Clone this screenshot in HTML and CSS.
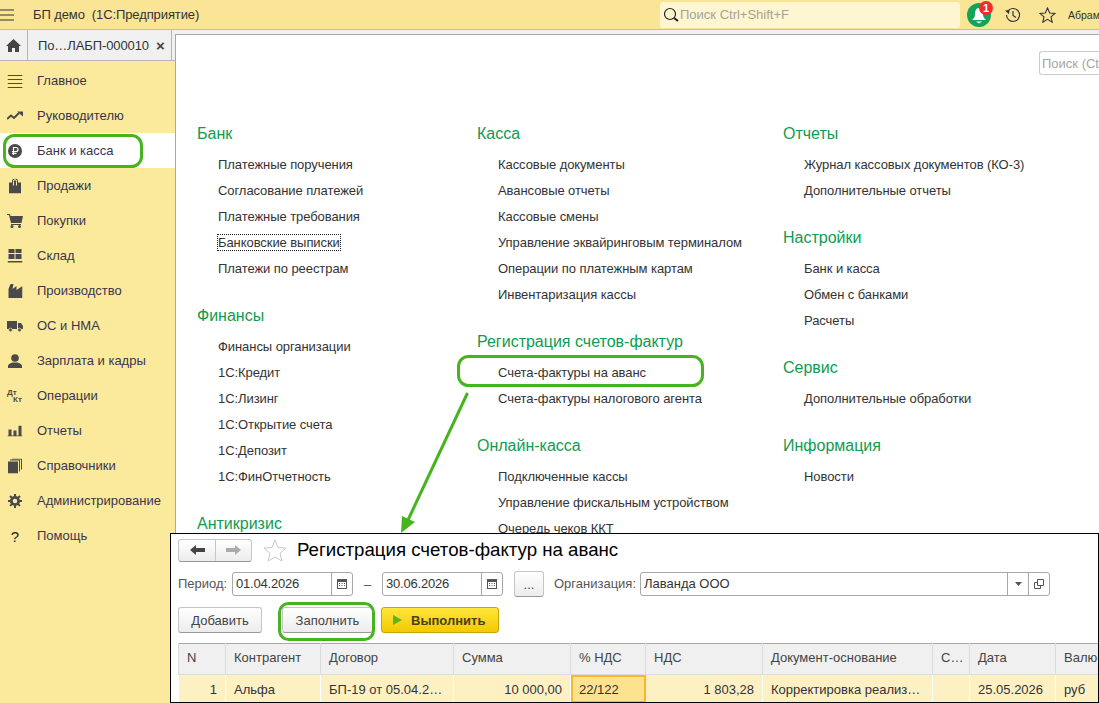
FILE: index.html
```html
<!DOCTYPE html>
<html lang="ru">
<head>
  <meta charset="UTF-8">
  <title>БП демо (1С:Предприятие)</title>
  <link rel="stylesheet" href="styles.css">
</head>
<body>
  <header class="topbar">
    <svg class="burger" width="14" height="12" viewBox="0 0 14 12"><path d="M0 1h14M0 6h14M0 11h14" stroke="#333" fill="none"/></svg>
    <div class="app-title">БП демо&nbsp; (1С:Предприятие)</div>
    <div class="global-search">
      <svg width="16" height="16" viewBox="0 0 16 16"><circle cx="7" cy="7" r="5.500" fill="none" stroke="#222" stroke-width="1.200"/><path d="M11 11l4 3" stroke="#222" stroke-width="2"/></svg>
      <span>Поиск Ctrl+Shift+F</span>
    </div>
    <div class="bell">
      <svg width="24" height="24" viewBox="0 0 24 24"><circle cx="12" cy="12" r="12" fill="#12a55a"/><path d="M12 5c3 0 4 3 4 6 0 3 1 4 3 6H5c2-2 3-3 3-6 0-3 1-6 4-6z" fill="#fff"/><path d="M9 18.500h6l-3 2z" fill="#fff"/></svg>
      <span class="bell-count">1</span>
    </div>
    <svg class="history" width="16" height="16" viewBox="0 0 16 16"><path d="M2.500 4.500A6.500 6.500 0 1 1 1.500 8" fill="none" stroke="#333" stroke-width="1.100"/><path d="M0 3.500l4.500-.5-.5 4.200z" fill="#333"/><path d="M8 4v4.500l3 2" fill="none" stroke="#333" stroke-width="1.200"/></svg>
    <svg class="fav" width="17" height="16" viewBox="0 0 17 16"><path d="M8.500 1l2.200 5 5.300.4-4 3.500 1.200 5.300-4.700-2.800-4.700 2.800 1.200-5.300-4-3.500 5.300-.4z" fill="none" stroke="#333" stroke-width="1.100"/></svg>
    <div class="user">Абрам</div>
  </header>

  <div class="workspace">
    <aside class="side">
      <div class="tabstrip">
        <div class="home"><svg width="15" height="13" viewBox="0 0 15 13"><path d="M7.500 0L0 7h2v6h4V9h3v4h4V7h2z" fill="#444"/></svg></div>
        <div class="tab"><span>По…ЛАБП-000010</span><b>×</b></div>
      </div>
      <nav class="menu">
        <a class="menu-item"><svg width="15" height="14" viewBox="0 0 15 14"><path d="M0 1.500h15M0 5.500h15M0 9.500h15M0 13.500h15" stroke="#4a4a4a" fill="none"/></svg>Главное</a>
        <a class="menu-item"><svg width="16" height="10" viewBox="0 0 16 10"><path d="M0 8l4-3.500 3 2.500 5-5" fill="none" stroke="#4a4a4a" stroke-width="2"/><path d="M10 .5h6v5z" fill="#4a4a4a"/></svg>Руководителю</a>
        <a class="menu-item active"><svg width="14" height="14" viewBox="0 0 14 14"><circle cx="7" cy="7" r="7" fill="#4a4a4a"/><path d="M5.500 11V3.500H8a2 2 0 0 1 0 4H4M4 9.300h4.500" fill="none" stroke="#fff" stroke-width="1.200"/></svg>Банк и касса</a>
        <a class="menu-item"><svg width="12" height="15" viewBox="0 0 12 15"><path d="M0 4h3V3a3 3 0 0 1 6 0v1h3v11H0z" fill="#4a4a4a"/><path d="M4.500 7V3a1.500 2 0 0 1 3 0v4" fill="none" stroke="#fbea9b"/></svg>Продажи</a>
        <a class="menu-item"><svg width="16" height="14" viewBox="0 0 16 14"><path d="M0 0h3l.5 2H16l-1.500 7H4L2 1H0z" fill="#4a4a4a"/><path d="M4 10h10v1H4z" fill="#4a4a4a"/><circle cx="5" cy="12.500" r="1.500" fill="#4a4a4a"/><circle cx="12.500" cy="12.500" r="1.500" fill="#4a4a4a"/></svg>Покупки</a>
        <a class="menu-item"><svg width="15" height="14" viewBox="0 0 15 14"><path d="M1 0h6v4H1zM8 0h6v4H8zM1 5h6v5H1zM8 5h6v5H8zM0 12h15v1.500H0z" fill="#4a4a4a"/></svg>Склад</a>
        <a class="menu-item"><svg width="15" height="14" viewBox="0 0 15 14"><path d="M1 14V5L3 0h3L5 5l4-3v4l6-4v12z" fill="#4a4a4a"/></svg>Производство</a>
        <a class="menu-item"><svg width="16" height="12" viewBox="0 0 16 12"><path d="M0 1h10v8H0zM11 3h3l2 3v3h-5z" fill="#4a4a4a"/><circle cx="3.500" cy="10" r="1.800" fill="#4a4a4a" stroke="#fbea9b" stroke-width=".7"/><circle cx="12.500" cy="10" r="1.800" fill="#4a4a4a" stroke="#fbea9b" stroke-width=".7"/></svg>ОС и НМА</a>
        <a class="menu-item"><svg width="14" height="14" viewBox="0 0 14 14"><circle cx="7" cy="4" r="3.800" fill="#4a4a4a"/><path d="M0 14v-2c0-2 3-3 4.500-3.500h5C11 9 14 10 14 12v2z" fill="#4a4a4a"/></svg>Зарплата и кадры</a>
        <a class="menu-item"><span class="dtkt"><i>Дт</i><i>Кт</i></span>Операции</a>
        <a class="menu-item"><svg width="15" height="11" viewBox="0 0 15 11"><path d="M1 4h3v6H1zM6 5h3v5H6zM11 0h3v10h-3zM0 10h15v1H0z" fill="#4a4a4a"/></svg>Отчеты</a>
        <a class="menu-item"><svg width="14" height="15" viewBox="0 0 14 15"><path d="M0 3h10v12H0z" fill="#4a4a4a"/><path d="M2 1.500h9.500V13M4 .5h9.500V11" fill="none" stroke="#4a4a4a"/></svg>Справочники</a>
        <a class="menu-item"><svg width="14" height="14" viewBox="0 0 14 14"><circle cx="7" cy="7" r="3.700" fill="none" stroke="#4a4a4a" stroke-width="2.800"/><path d="M7 0v14M0 7h14M2 2l10 10M12 2L2 12" stroke="#4a4a4a" stroke-width="2" stroke-dasharray="2.500 9"/></svg>Администрирование</a>
        <a class="menu-item"><span class="help-mark">?</span>Помощь</a>
      </nav>
    </aside>

    <div class="main-wrap">
      <div class="ticks"><i></i><i></i><i></i><i></i><i></i><i></i></div>
      <main class="panel">
        <div class="panel-search">Поиск (Ct</div>
        <div class="columns">
          <div class="col col-1">
            <section class="group">
              <h2>Банк</h2>
              <a>Платежные поручения</a>
              <a>Согласование платежей</a>
              <a>Платежные требования</a>
              <a><span class="focused">Банковские выписки</span></a>
              <a>Платежи по реестрам</a>
            </section>
            <section class="group">
              <h2>Финансы</h2>
              <a>Финансы организации</a>
              <a>1С:Кредит</a>
              <a>1С:Лизинг</a>
              <a>1С:Открытие счета</a>
              <a>1С:Депозит</a>
              <a>1С:ФинОтчетность</a>
            </section>
            <section class="group">
              <h2>Антикризис</h2>
            </section>
          </div>
          <div class="col col-2">
            <section class="group">
              <h2>Касса</h2>
              <a>Кассовые документы</a>
              <a>Авансовые отчеты</a>
              <a>Кассовые смены</a>
              <a>Управление эквайринговым терминалом</a>
              <a>Операции по платежным картам</a>
              <a>Инвентаризация кассы</a>
            </section>
            <section class="group">
              <h2>Регистрация счетов-фактур</h2>
              <a>Счета-фактуры на аванс</a>
              <a>Счета-фактуры налогового агента</a>
            </section>
            <section class="group">
              <h2>Онлайн-касса</h2>
              <a>Подключенные кассы</a>
              <a>Управление фискальным устройством</a>
              <a>Очередь чеков ККТ</a>
            </section>
          </div>
          <div class="col col-3">
            <section class="group">
              <h2>Отчеты</h2>
              <a>Журнал кассовых документов (КО-3)</a>
              <a>Дополнительные отчеты</a>
            </section>
            <section class="group">
              <h2>Настройки</h2>
              <a>Банк и касса</a>
              <a>Обмен с банками</a>
              <a>Расчеты</a>
            </section>
            <section class="group">
              <h2>Сервис</h2>
              <a>Дополнительные обработки</a>
            </section>
            <section class="group">
              <h2>Информация</h2>
              <a>Новости</a>
            </section>
          </div>
        </div>
      </main>
    </div>
  </div>

  <div class="inset">
    <div class="inset-head">
      <div class="nav-btns">
        <button class="nav-btn"><svg width="15" height="10" viewBox="0 0 15 10"><path d="M0 5l6-5v3h9v4H6v3z" fill="#444"/></svg></button>
        <button class="nav-btn"><svg width="15" height="10" viewBox="0 0 15 10"><path d="M15 5L9 0v3H0v4h9v3z" fill="#aaa"/></svg></button>
      </div>
      <svg class="inset-star" width="24" height="23" viewBox="0 0 24 23"><path d="M12 1l3.100 7.500 8 .6-6.100 5.200 1.900 7.800-6.900-4.200-6.900 4.200 1.900-7.800L.9 9.100l8-.6z" fill="#fff" stroke="#c8c8c8"/></svg>
      <h1>Регистрация счетов-фактур на аванс</h1>
    </div>
    <div class="filter-row">
      <label>Период:</label>
      <div class="field date"><span>01.04.2026</span><i class="cell"><svg width="10" height="10" viewBox="0 0 10 10"><path d="M0 0h10v10H0z" fill="#555"/><path d="M1 3h8v6H1z" fill="#fff"/><path d="M2 4h1v1H2zM4.500 4h1v1h-1zM7 4h1v1H7zM2 6h1v1H2zM4.500 6h1v1h-1zM7 6h1v1H7z" fill="#555"/></svg></i></div>
      <span class="dash">–</span>
      <div class="field date"><span>30.06.2026</span><i class="cell"><svg width="10" height="10" viewBox="0 0 10 10"><path d="M0 0h10v10H0z" fill="#555"/><path d="M1 3h8v6H1z" fill="#fff"/><path d="M2 4h1v1H2zM4.500 4h1v1h-1zM7 4h1v1H7zM2 6h1v1H2zM4.500 6h1v1h-1zM7 6h1v1H7z" fill="#555"/></svg></i></div>
      <button class="btn dots">...</button>
      <label class="org-label">Организация:</label>
      <div class="field org"><span>Лаванда ООО</span><i class="cell"><svg width="7" height="4" viewBox="0 0 7 4"><path d="M0 0h7L3.500 4z" fill="#555"/></svg></i><i class="cell"><svg width="10" height="10" viewBox="0 0 10 10"><path d="M3.500.5h6v6h-6zM3.500 3.500H.5v6h6v-3" fill="none" stroke="#555"/></svg></i></div>
    </div>
    <div class="btn-row">
      <button class="btn add">Добавить</button>
      <button class="btn fill">Заполнить</button>
      <button class="btn run"><i></i>Выполнить</button>
    </div>
    <table class="grid">
      <colgroup>
        <col class="c-n"><col class="c-agent"><col class="c-contract"><col class="c-sum"><col class="c-rate"><col class="c-sum"><col class="c-doc"><col class="c-s"><col class="c-date"><col class="c-cur">
      </colgroup>
      <thead>
        <tr><th>N</th><th>Контрагент</th><th>Договор</th><th>Сумма</th><th>% НДС</th><th>НДС</th><th>Документ-основание</th><th>С…</th><th>Дата</th><th>Валю</th></tr>
      </thead>
      <tbody>
        <tr><td class="num">1</td><td>Альфа</td><td>БП-19 от 05.04.2…</td><td class="num">10 000,00</td><td class="cur">22/122</td><td class="num">1 803,28</td><td>Корректировка реализ…</td><td></td><td>25.05.2026</td><td>руб</td></tr>
      </tbody>
    </table>
  </div>

  <svg class="marks" width="1099" height="703" viewBox="0 0 1099 703">
    <g fill="none" stroke="#46b41e" stroke-width="3">
      <rect x="4.500" y="135.500" width="137" height="31" rx="10"/>
      <rect x="458.500" y="356.500" width="244" height="29" rx="10"/>
      <rect x="279.500" y="603.500" width="94" height="36" rx="9"/>
      <path d="M467.500 393L408 520"/>
    </g>
    <path d="M401 533l1-17 13 6z" fill="#46b41e"/>
  </svg>
</body>
</html>
```
FILE: styles.css
```css
* {
  box-sizing: border-box;
}
html, body {
  margin: 0;
  height: 703px;
  overflow: hidden;
}
body {
  position: relative;
  font-family: "Liberation Sans", Arial, sans-serif;
  font-size: 13px;
  color: #333;
  background: #fbea9b;
}
.topbar {
  display: flex;
  align-items: center;
  height: 30px;
  background: #f9e595;
  border-bottom: 1px solid #cfc07f;
  white-space: nowrap;
  overflow: hidden;
}
.topbar > * {
  flex: none;
}
.app-title {
  margin-left: 19px;
  width: 627px;
  letter-spacing: -.1px;
}
.global-search {
  display: flex;
  align-items: center;
  gap: 1px;
  width: 300px;
  height: 26px;
  padding-left: 3px;
  background: #fdf6d0;
  border-radius: 3px;
  color: #a7a297;
}
.bell {
  position: relative;
  width: 24px;
  height: 24px;
  margin-left: 7px;
}
.bell-count {
  position: absolute;
  top: -2px;
  right: -2px;
  width: 14px;
  height: 14px;
  border-radius: 50%;
  background: #ef2b2d;
  color: #fff;
  font-size: 11px;
  font-weight: bold;
  line-height: 14px;
  text-align: center;
}
.history {
  margin-left: 14px;
}
.fav {
  margin-left: 18px;
}
.user {
  margin-left: 12px;
  font-size: 10.500px;
}
.workspace {
  display: flex;
  height: 673px;
}
.side {
  flex: none;
  width: 175px;
}
.tabstrip {
  display: flex;
  height: 31px;
  padding-right: 3px;
  background: #f0f0f0;
  border-bottom: 1px solid #b5b5b5;
}
.home {
  display: flex;
  align-items: center;
  justify-content: center;
  width: 28px;
  border-right: 1px solid #b5b5b5;
}
.tab {
  flex: 1;
  display: flex;
  align-items: center;
  gap: 7px;
  padding-left: 10px;
  border-right: 1px solid #b5b5b5;
  white-space: nowrap;
  letter-spacing: -.1px;
}
.tab b {
  font-size: 15px;
  color: #444;
}
.menu {
  display: flex;
  flex-direction: column;
  padding-top: 2px;
}
.menu-item {
  position: relative;
  display: flex;
  align-items: center;
  height: 35px;
  padding-left: 37px;
  color: #3a3550;
  white-space: nowrap;
}
.menu-item svg, .dtkt, .help-mark {
  position: absolute;
  left: 15px;
  top: 50%;
  transform: translate(-50%, -50%);
}
.menu-item.active {
  background: #fff;
}
.dtkt {
  display: block;
  width: 16px;
  font-size: 8px;
  font-weight: bold;
  line-height: 7px;
  color: #4a4a4a;
}
.dtkt i {
  display: block;
  font-style: normal;
}
.dtkt i + i {
  padding-left: 6px;
}
.help-mark {
  font-size: 15px;
  color: #222;
}
.main-wrap {
  flex: 1;
  display: flex;
  flex-direction: column;
  min-width: 0;
}
.ticks {
  display: flex;
  flex: none;
  height: 4px;
  padding-left: 142px;
  background: #f0f0f0;
}
.ticks i {
  width: 1px;
  margin-right: 144px;
  background: #a8a8a8;
}
.panel {
  position: relative;
  flex: 1;
  background: #fff;
  border-top: 1px solid #a8a8a8;
  border-left: 1px solid #a8a8a8;
  overflow: hidden;
}
.panel-search {
  position: absolute;
  left: 863px;
  top: 16px;
  width: 62px;
  height: 24px;
  padding: 4px 2px;
  border: 1px solid #ccc;
  border-right: 0;
  border-radius: 3px 0 0 3px;
  color: #a5a5a5;
  white-space: nowrap;
}
.columns {
  display: flex;
  padding: 86px 0 0 21px;
}
.col-1 {
  width: 280px;
}
.col-2 {
  width: 306px;
}
.group {
  margin-bottom: 21px;
}
.group h2 {
  margin: 0 0 5px;
  font-size: 16px;
  font-weight: normal;
  line-height: 26px;
  color: #109b50;
}
.group a {
  display: block;
  padding-left: 21px;
  line-height: 26px;
  white-space: nowrap;
  letter-spacing: -.07px;
}
.focused {
  outline: 1px dotted #222;
}
.inset {
  position: absolute;
  left: 170px;
  top: 533px;
  width: 929px;
  height: 170px;
  padding: 4px 0 0 7px;
  background: #fff;
  border: 1px solid #000;
  overflow: hidden;
}
.inset-head {
  display: flex;
  align-items: center;
  height: 24px;
}
.nav-btns {
  display: flex;
  height: 23px;
  border: 1px solid #c6c6c6;
  border-bottom-color: #999;
  border-radius: 3px;
  background: linear-gradient(#fff, #ececec);
}
.nav-btn {
  display: flex;
  align-items: center;
  justify-content: center;
  width: 36px;
  padding: 0;
  border: 0;
  background: none;
}
.nav-btn + .nav-btn {
  border-left: 1px solid #c6c6c6;
}
.inset-star {
  margin-left: 11px;
}
.inset-head h1 {
  margin: 0 0 0 10px;
  font-size: 18.670px;
  font-weight: normal;
  color: #000;
}
.filter-row {
  display: flex;
  align-items: center;
  height: 24px;
  margin-top: 10px;
  color: #555;
}
.filter-row label {
  width: 54px;
  padding-bottom: 2px;
  white-space: nowrap;
}
.field {
  display: flex;
  align-items: center;
  height: 24px;
  border: 1px solid #a8a8a8;
  border-radius: 3px;
  background: #fff;
  color: #333;
}
.field span {
  flex: 1;
  padding: 0 0 2px 3px;
}
.date span {
  letter-spacing: -.2px;
}
.date {
  width: 121px;
}
.cell {
  display: flex;
  align-items: center;
  justify-content: center;
  width: 21px;
  height: 100%;
  border-left: 1px solid #a8a8a8;
}
.dash {
  width: 29px;
  text-align: center;
}
.dots {
  width: 30px;
  height: 24px;
  margin-left: 11px;
}
.filter-row .org-label {
  width: 86px;
  margin-left: 10px;
}
.org {
  width: 410px;
}
.btn-row {
  display: flex;
  height: 26px;
  margin-top: 11px;
}
.btn {
  height: 26px;
  padding: 0;
  border: 1px solid #c6c6c6;
  border-bottom-color: #999;
  border-radius: 3px;
  background: linear-gradient(#fff, #ececec);
  font: inherit;
  color: #444;
}
.add {
  width: 84px;
}
.fill {
  width: 91px;
  margin-left: 20px;
}
.run {
  display: flex;
  align-items: center;
  width: 118px;
  margin-left: 8px;
  padding-left: 11px;
  border-color: #c9a700;
  background: linear-gradient(#ffe53d, #f3ca00);
  font-weight: bold;
  color: #4a4015;
}
.run i {
  width: 0;
  height: 0;
  margin-right: 9px;
  border-left: 9px solid #5cb41e;
  border-top: 5px solid transparent;
  border-bottom: 5px solid transparent;
}
.grid {
  width: 921px;
  margin-top: 10px;
  border-collapse: collapse;
  table-layout: fixed;
  border-top: 1px solid #a8a8a8;
}
.c-n { width: 47px; }
.c-agent { width: 95px; }
.c-contract { width: 133px; }
.c-sum { width: 117px; }
.c-rate { width: 75px; }
.c-doc { width: 170px; }
.c-s { width: 37px; }
.c-date { width: 86px; }
.c-cur { width: 44px; }
.grid th, .grid td {
  padding: 0 8px;
  border: 1px solid #dcdcdc;
  border-top: 0;
  font-weight: normal;
  text-align: left;
  white-space: nowrap;
  overflow: hidden;
}
.grid th {
  height: 31px;
  padding-bottom: 3px;
  background: #f0f0f0;
  color: #444;
}
.grid td {
  height: 28px;
  padding-top: 1px;
  background: #fdf1c4;
  border-color: #fff;
  color: #333;
}
.grid td.num {
  text-align: right;
}
.grid td.cur {
  background: #fee28f;
  outline: 2px solid #f4b92c;
  outline-offset: -2px;
}
.marks {
  position: absolute;
  left: 0;
  top: 0;
  pointer-events: none;
}
```
